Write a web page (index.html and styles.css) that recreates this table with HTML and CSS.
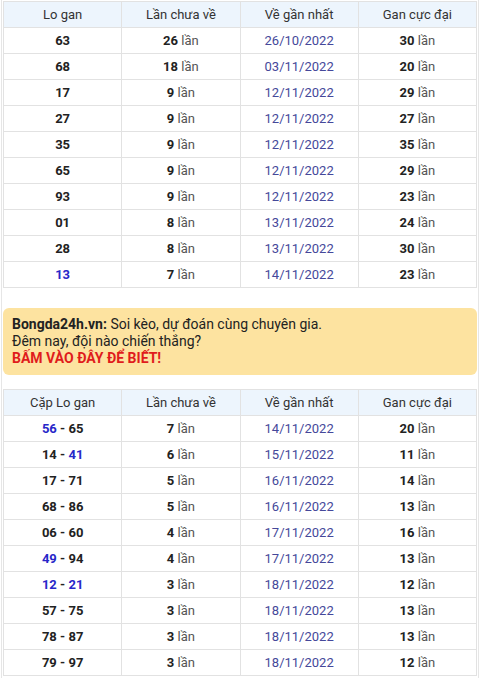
FILE: index.html
```html
<!DOCTYPE html>
<html lang="vi">
<head>
<meta charset="utf-8">
<link rel="stylesheet" href="styles.css">
</head>
<body>
<div class="page">
  <table class="tbl">
    <thead>
      <tr><th>Lo gan</th><th>Lần chưa về</th><th>Về gần nhất</th><th>Gan cực đại</th></tr>
    </thead>
    <tbody>
      <tr><td><b>63</b></td><td><b>26</b> <span class="l">lần</span></td><td class="d">26/10/2022</td><td><b>30</b> <span class="l">lần</span></td></tr>
      <tr><td><b>68</b></td><td><b>18</b> <span class="l">lần</span></td><td class="d">03/11/2022</td><td><b>20</b> <span class="l">lần</span></td></tr>
      <tr><td><b>17</b></td><td><b>9</b> <span class="l">lần</span></td><td class="d">12/11/2022</td><td><b>29</b> <span class="l">lần</span></td></tr>
      <tr><td><b>27</b></td><td><b>9</b> <span class="l">lần</span></td><td class="d">12/11/2022</td><td><b>27</b> <span class="l">lần</span></td></tr>
      <tr><td><b>35</b></td><td><b>9</b> <span class="l">lần</span></td><td class="d">12/11/2022</td><td><b>35</b> <span class="l">lần</span></td></tr>
      <tr><td><b>65</b></td><td><b>9</b> <span class="l">lần</span></td><td class="d">12/11/2022</td><td><b>29</b> <span class="l">lần</span></td></tr>
      <tr><td><b>93</b></td><td><b>9</b> <span class="l">lần</span></td><td class="d">12/11/2022</td><td><b>23</b> <span class="l">lần</span></td></tr>
      <tr><td><b>01</b></td><td><b>8</b> <span class="l">lần</span></td><td class="d">13/11/2022</td><td><b>24</b> <span class="l">lần</span></td></tr>
      <tr><td><b>28</b></td><td><b>8</b> <span class="l">lần</span></td><td class="d">13/11/2022</td><td><b>30</b> <span class="l">lần</span></td></tr>
      <tr><td><b class="b">13</b></td><td><b>7</b> <span class="l">lần</span></td><td class="d">14/11/2022</td><td><b>23</b> <span class="l">lần</span></td></tr>
    </tbody>
  </table>

  <div class="promo">
    <div><b>Bongda24h.vn:</b> Soi kèo, dự đoán cùng chuyên gia.</div>
    <div>Đêm nay, đội nào chiến thắng?</div>
    <div class="cta">BẤM VÀO ĐÂY ĐỂ BIẾT!</div>
  </div>

  <table class="tbl">
    <thead>
      <tr><th>Cặp Lo gan</th><th>Lần chưa về</th><th>Về gần nhất</th><th>Gan cực đại</th></tr>
    </thead>
    <tbody>
      <tr><td><b class="b">56</b> <b>-</b> <b>65</b></td><td><b>7</b> <span class="l">lần</span></td><td class="d">14/11/2022</td><td><b>20</b> <span class="l">lần</span></td></tr>
      <tr><td><b>14</b> <b>-</b> <b class="b">41</b></td><td><b>6</b> <span class="l">lần</span></td><td class="d">15/11/2022</td><td><b>11</b> <span class="l">lần</span></td></tr>
      <tr><td><b>17</b> <b>-</b> <b>71</b></td><td><b>5</b> <span class="l">lần</span></td><td class="d">16/11/2022</td><td><b>14</b> <span class="l">lần</span></td></tr>
      <tr><td><b>68</b> <b>-</b> <b>86</b></td><td><b>5</b> <span class="l">lần</span></td><td class="d">16/11/2022</td><td><b>13</b> <span class="l">lần</span></td></tr>
      <tr><td><b>06</b> <b>-</b> <b>60</b></td><td><b>4</b> <span class="l">lần</span></td><td class="d">17/11/2022</td><td><b>16</b> <span class="l">lần</span></td></tr>
      <tr><td><b class="b">49</b> <b>-</b> <b>94</b></td><td><b>4</b> <span class="l">lần</span></td><td class="d">17/11/2022</td><td><b>13</b> <span class="l">lần</span></td></tr>
      <tr><td><b class="b">12</b> <b>-</b> <b class="b">21</b></td><td><b>3</b> <span class="l">lần</span></td><td class="d">18/11/2022</td><td><b>12</b> <span class="l">lần</span></td></tr>
      <tr><td><b>57</b> <b>-</b> <b>75</b></td><td><b>3</b> <span class="l">lần</span></td><td class="d">18/11/2022</td><td><b>13</b> <span class="l">lần</span></td></tr>
      <tr><td><b>78</b> <b>-</b> <b>87</b></td><td><b>3</b> <span class="l">lần</span></td><td class="d">18/11/2022</td><td><b>13</b> <span class="l">lần</span></td></tr>
      <tr><td><b>79</b> <b>-</b> <b>97</b></td><td><b>3</b> <span class="l">lần</span></td><td class="d">18/11/2022</td><td><b>12</b> <span class="l">lần</span></td></tr>
    </tbody>
  </table>
</div>
</body>
</html>
```

FILE: styles.css
```css
html, body {
  margin: 0;
  padding: 0;
  background: #ffffff;
}
body {
  font-family: Roboto, "Liberation Sans", Arial, sans-serif;
  font-size: 13px;
  color: #222;
}
.page {
  margin: 0 1px;
  border-left: 1px solid #e6e6e6;
  border-right: 1px solid #e6e6e6;
  padding: 1px 1px 4px;
  min-height: 678px;
  box-sizing: border-box;
}
.tbl {
  width: 100%;
  border-collapse: collapse;
  table-layout: fixed;
  border: 1px solid #e2e2e2;
}
.tbl th, .tbl td {
  border: 1px solid #e2e2e2;
  height: 25px;
  padding: 0;
  text-align: center;
  vertical-align: middle;
  line-height: 15px;
}
.tbl th {
  background: #edf5fd;
  font-weight: 400;
  color: #333;
}
.tbl td b {
  font-weight: 700;
  color: #222;
}
.tbl td b.b {
  color: #2727c9;
}
.l {
  color: #555;
}
.d {
  color: #45489a;
}
.promo {
  margin: 20px 0 14px;
  background: #fde3a0;
  border-radius: 6px;
  padding: 8px 9px;
  font-size: 14px;
  line-height: 17px;
  color: #222;
}
.promo b {
  font-weight: 700;
}
.cta {
  color: #e01c1c;
  font-weight: 700;
}
```
